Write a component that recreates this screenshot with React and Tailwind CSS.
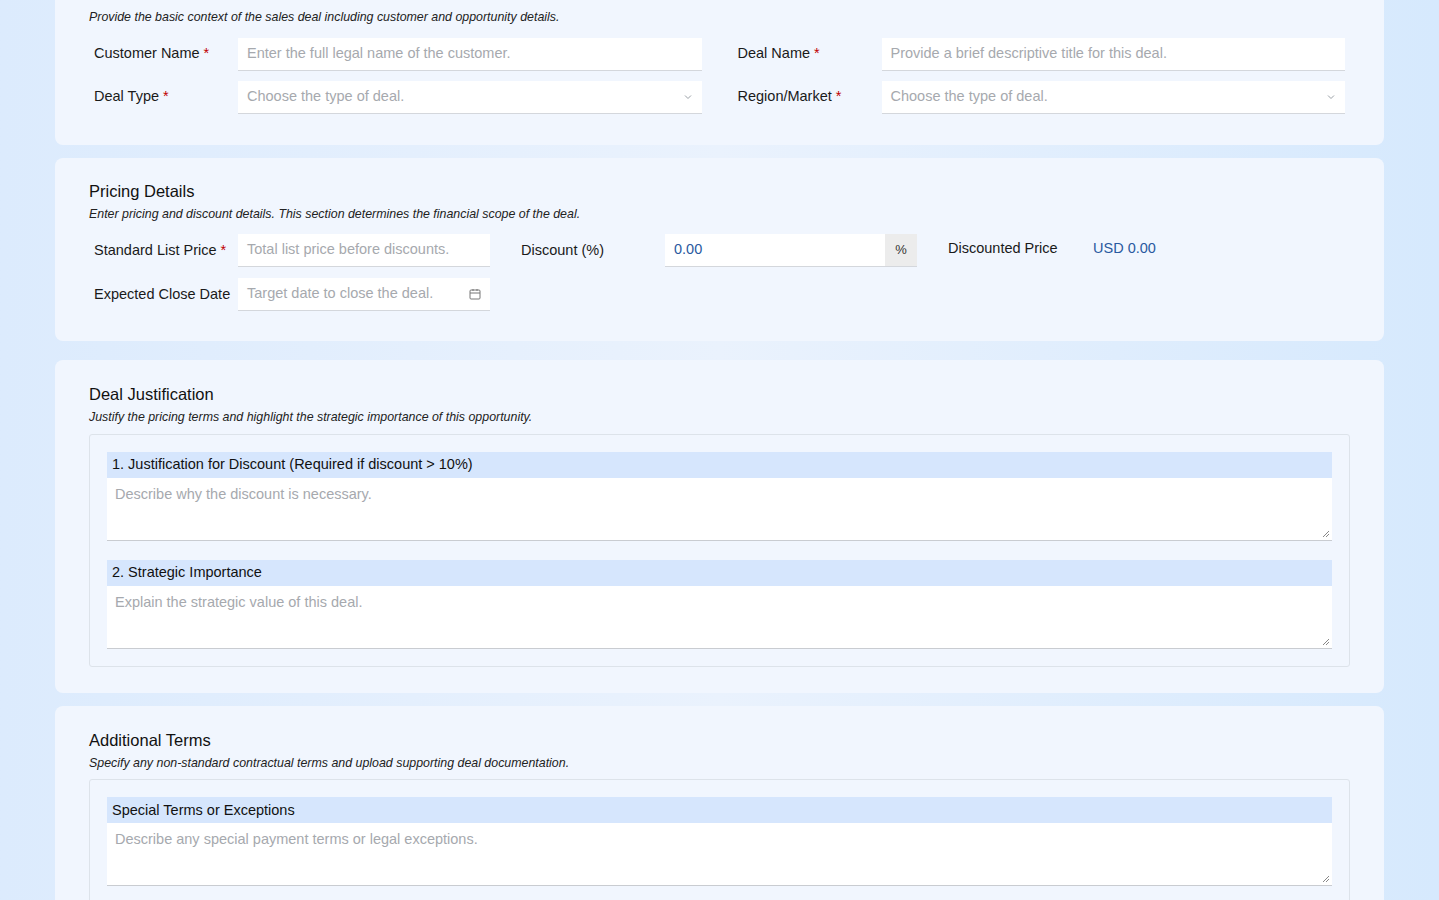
import React from "react";

const font = { fontFamily: '"Liberation Sans", Arial, sans-serif' };

function Req() {
  return <span className="text-[#c00000] ml-1">*</span>;
}

function Label({ children, req }) {
  return (
    <div className="w-[149px] shrink-0 pl-[5px] text-[14.5px] text-[#1a1a1a]">
      {children}
      {req && <Req />}
    </div>
  );
}

function Field({ placeholder, icon, w = "flex-1", value }) {
  return (
    <div className={`${w} h-[33px] bg-white border-b border-[#d4d7dc] flex items-center px-[9px] text-[14.5px]`}>
      <span className={value ? "text-[#2a5aa0] flex-1" : "text-[#a6a9ae] flex-1"}>{value || placeholder}</span>
      {icon}
    </div>
  );
}

const Chevron = (
  <svg width="10" height="10" viewBox="0 0 10 10" className="text-[#9aa0a6]">
    <path d="M2 3.5 L5 6.5 L8 3.5" fill="none" stroke="currentColor" strokeWidth="1" />
  </svg>
);

const Calendar = (
  <svg width="12" height="12" viewBox="0 0 12 12" className="text-[#777]">
    <rect x="1" y="2" width="10" height="9" rx="1" fill="none" stroke="currentColor" />
    <path d="M1 5 H11 M4 1 V3 M8 1 V3" stroke="currentColor" />
  </svg>
);

function Card({ title, subtitle, children, className = "" }) {
  return (
    <div className={`bg-[#f1f6fe] rounded-lg px-[34px] pt-[23px] ${className}`}>
      <div className="text-[16.5px] text-[#111] leading-[20px]">{title}</div>
      <div className="text-[12.4px] italic text-[#222] mt-[4px] mb-[11px]">{subtitle}</div>
      {children}
    </div>
  );
}

function TextBlock({ title, placeholder }) {
  return (
    <div>
      <div className="bg-[#d6e6fd] h-[26px] flex items-center px-[5px] text-[14.5px] text-[#111]">{title}</div>
      <div className="bg-white h-[63px] border-b border-[#c9ccd1] px-[8px] pt-[6px] text-[14.5px] text-[#a6a9ae] relative">
        {placeholder}
        <svg width="8" height="8" viewBox="0 0 8 8" className="absolute right-[2px] bottom-[2px] text-[#888]">
          <path d="M7 1 L1 7 M7 4 L4 7" stroke="currentColor" strokeWidth="1" />
        </svg>
      </div>
    </div>
  );
}

export default function App() {
  return (
    <div style={font} className="min-h-screen bg-gradient-to-r from-[#dcebfd] via-[#eaf2fd] to-[#d6e9fd] px-[55px] pb-10 overflow-hidden">
      <Card
        className="-mt-[39px] pb-[31px]"
        title="Deal Information"
        subtitle="Provide the basic context of the sales deal including customer and opportunity details."
      >
        <div className="grid grid-cols-2 gap-x-[31px] gap-y-[10px] pr-[5px]">
          <div className="flex items-center">
            <Label req>Customer Name</Label>
            <Field placeholder="Enter the full legal name of the customer." />
          </div>
          <div className="flex items-center">
            <Label req>Deal Name</Label>
            <Field placeholder="Provide a brief descriptive title for this deal." />
          </div>
          <div className="flex items-center">
            <Label req>Deal Type</Label>
            <Field placeholder="Choose the type of deal." icon={Chevron} />
          </div>
          <div className="flex items-center">
            <Label req>Region/Market</Label>
            <Field placeholder="Choose the type of deal." icon={Chevron} />
          </div>
        </div>
      </Card>

      <Card
        className="mt-[13px] pb-[30px]"
        title="Pricing Details"
        subtitle="Enter pricing and discount details. This section determines the financial scope of the deal."
      >
        <div className="flex flex-col gap-[11px]">
          <div className="flex items-center">
            <Label req>Standard List Price</Label>
            <Field w="w-[252px]" placeholder="Total list price before discounts." />
            <div className="w-[144px] ml-[31px] text-[14.5px] text-[#1a1a1a]">Discount (%)</div>
            <div className="flex">
              <Field w="w-[220px]" value="0.00" />
              <div className="w-[32px] h-[33px] bg-[#ececec] border-b border-[#d4d7dc] flex items-center justify-center text-[13px] text-[#333]">%</div>
            </div>
            <div className="flex self-start pt-[4px] ml-[31px] text-[14.5px]">
              <div className="w-[145px] text-[#1a1a1a]">Discounted Price</div>
              <div className="text-[#2a5aa0]">USD 0.00</div>
            </div>
          </div>
          <div className="flex items-center">
            <Label>Expected Close Date</Label>
            <Field w="w-[252px]" placeholder="Target date to close the deal." icon={Calendar} />
          </div>
        </div>
      </Card>

      <Card
        className="mt-[19px] pt-[24px] pb-[26px]"
        title="Deal Justification"
        subtitle="Justify the pricing terms and highlight the strategic importance of this opportunity."
      >
        <div className="-mt-[4px] border border-[#dde3ea] rounded-[3px] p-[17px] flex flex-col gap-[19px]">
          <TextBlock title="1. Justification for Discount (Required if discount > 10%)" placeholder="Describe why the discount is necessary." />
          <TextBlock title="2. Strategic Importance" placeholder="Explain the strategic value of this deal." />
        </div>
      </Card>

      <Card
        className="mt-[13px] pt-[24px] pb-[26px]"
        title="Additional Terms"
        subtitle="Specify any non-standard contractual terms and upload supporting deal documentation."
      >
        <div className="-mt-[4px] border border-[#dde3ea] rounded-[3px] p-[17px] flex flex-col gap-[19px]">
          <TextBlock title="Special Terms or Exceptions" placeholder="Describe any special payment terms or legal exceptions." />
        </div>
      </Card>
    </div>
  );
}
